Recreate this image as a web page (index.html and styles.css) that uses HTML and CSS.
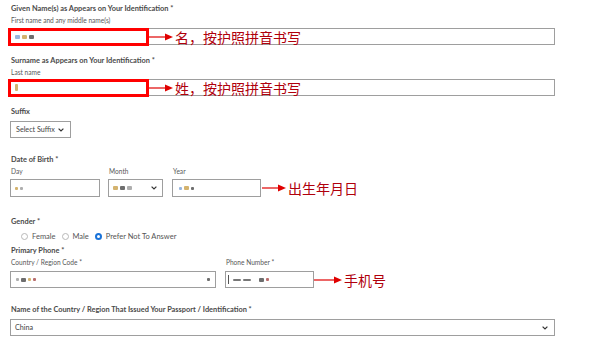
FILE: index.html
```html
<!DOCTYPE html>
<html lang="en">
<head>
<meta charset="utf-8">
<title>Identification form</title>
<link rel="stylesheet" href="styles.css">
</head>
<body>
<form class="form">
  <section class="group g-given">
    <div class="label">Given Name(s) as Appears on Your Identification *</div>
    <div class="sub">First name and any middle name(s)</div>
    <div class="annot">
      <div class="box full"><span class="sm s-blue"></span><span class="sm s-gold"></span><span class="sm s-dark"></span></div>
      <div class="redbox"></div>
      <div class="note over">
        <svg class="arrow" width="24" height="10" viewBox="0 0 24 10"><line x1="0" y1="5" x2="17" y2="5" stroke="#e00000" stroke-width="1.2"/><polygon points="16,1.5 24,5 16,8.5" fill="#e00000"/></svg>
        <span class="cn">名，按护照拼音书写</span>
      </div>
    </div>
  </section>

  <section class="group g-surname">
    <div class="label">Surname as Appears on Your Identification *</div>
    <div class="sub">Last name</div>
    <div class="annot">
      <div class="box full"><span class="sm s-gold tall"></span></div>
      <div class="redbox"></div>
      <div class="note over">
        <svg class="arrow" width="24" height="10" viewBox="0 0 24 10"><line x1="0" y1="5" x2="17" y2="5" stroke="#e00000" stroke-width="1.2"/><polygon points="16,1.5 24,5 16,8.5" fill="#e00000"/></svg>
        <span class="cn">姓，按护照拼音书写</span>
      </div>
    </div>
  </section>

  <section class="group g-suffix">
    <div class="label">Suffix</div>
    <div class="box select suffix">
      <span class="val">Select Suffix</span>
      <svg class="chev" width="6" height="4" viewBox="0 0 6 4"><polyline points="0.6,0.6 3,3 5.4,0.6" fill="none" stroke="#333" stroke-width="1.2"/></svg>
    </div>
  </section>

  <section class="group g-dob">
    <div class="label">Date of Birth *</div>
    <div class="date-row">
      <div class="col">
        <div class="sub">Day</div>
        <div class="box tall-box day"><span class="sm s-gold small"></span><span class="sm s-grey small"></span></div>
      </div>
      <div class="col">
        <div class="sub">Month</div>
        <div class="box tall-box select month">
          <span class="val"><span class="sm s-gold"></span><span class="sm s-dark"></span><span class="sm s-grey"></span></span>
          <svg class="chev" width="6" height="4" viewBox="0 0 6 4"><polyline points="0.6,0.6 3,3 5.4,0.6" fill="none" stroke="#333" stroke-width="1.2"/></svg>
        </div>
      </div>
      <div class="col">
        <div class="sub">Year</div>
        <div class="note-row">
          <div class="box tall-box year"><span class="sm s-blue small"></span><span class="sm s-gold"></span><span class="sm s-dark small"></span></div>
          <div class="note">
            <svg class="arrow" width="24" height="10" viewBox="0 0 24 10"><line x1="0" y1="5" x2="17" y2="5" stroke="#e00000" stroke-width="1.2"/><polygon points="16,1.5 24,5 16,8.5" fill="#e00000"/></svg>
            <span class="cn">出生年月日</span>
          </div>
        </div>
      </div>
    </div>
  </section>

  <section class="group g-gender">
    <div class="label">Gender *</div>
    <div class="radios">
      <span class="radio"><span class="dot"></span>Female</span>
      <span class="radio"><span class="dot"></span>Male</span>
      <span class="radio"><span class="dot on"></span>Prefer Not To Answer</span>
    </div>
  </section>

  <section class="group g-phone">
    <div class="label">Primary Phone *</div>
    <div class="phone-row">
      <div class="col">
        <div class="sub">Country / Region Code *</div>
        <div class="box code">
          <span class="val"><span class="sm s-grey small"></span><span class="sm s-dark"></span><span class="sm s-gold small"></span><span class="sm s-red small"></span></span>
          <span class="sm s-dark small"></span>
        </div>
      </div>
      <div class="col">
        <div class="sub">Phone Number *</div>
        <div class="note-row">
          <div class="box phone"><span class="caret"></span><span class="sm s-dash"></span><span class="sm s-dash"></span><span class="sm s-dark gap"></span><span class="sm s-red small"></span></div>
          <div class="note">
            <svg class="arrow" width="28" height="10" viewBox="0 0 28 10"><line x1="0" y1="5" x2="21" y2="5" stroke="#e00000" stroke-width="1.2"/><polygon points="20,1.5 28,5 20,8.5" fill="#e00000"/></svg>
            <span class="cn">手机号</span>
          </div>
        </div>
      </div>
    </div>
  </section>

  <section class="group g-issued">
    <div class="label">Name of the Country / Region That Issued Your Passport / Identification *</div>
    <div class="box select full">
      <span class="val">China</span>
      <svg class="chev" width="6" height="4" viewBox="0 0 6 4"><polyline points="0.6,0.6 3,3 5.4,0.6" fill="none" stroke="#333" stroke-width="1.2"/></svg>
    </div>
  </section>
</form>
</body>
</html>
```

FILE: styles.css
```css
html, body {
  margin: 0;
  padding: 0;
  background: #ffffff;
}

body {
  width: 613px;
  height: 348px;
  overflow: hidden;
  font-family: Lato, "Open Sans", "Liberation Sans", sans-serif;
  color: #444;
}

.form {
  display: flex;
  flex-direction: column;
  padding: 4px 0 0 10px;
  margin: 0;
}

.label {
  font-size: 7.4px;
  font-weight: 700;
  line-height: 10px;
  color: #4a4a4a;
  padding-left: 1px;
  white-space: nowrap;
}

.sub {
  font-size: 6.6px;
  line-height: 10px;
  color: #585858;
  padding-left: 1px;
  margin-top: 1px;
  white-space: nowrap;
}

.box {
  box-sizing: border-box;
  height: 17px;
  border: 1px solid #9e9e9e;
  background: #fff;
  display: flex;
  align-items: center;
  gap: 2px;
  padding: 0 4px;
  font-size: 7.2px;
  color: #444;
}

.full { width: 545px; }

.select { justify-content: space-between; padding-right: 6px; }
.select .val { display: flex; align-items: center; gap: 2px; padding-left: 0; }
.chev { display: block; }

/* groups */
.g-given .annot { margin-top: 3px; }
.g-surname { margin-top: 11px; }
.g-surname .annot { margin-top: 2px; }
.g-suffix { margin-top: 11px; }
.g-suffix .box { margin-top: 4px; }
.suffix { width: 61px; padding-left: 5px; }
.g-dob { margin-top: 17px; }
.g-gender { margin-top: 20px; }
.g-phone { margin-top: 5px; }
.g-issued { margin-top: 17px; }
.g-issued .box { margin-top: 4px; }

/* annotation overlays */
.annot {
  position: relative;
}

.redbox {
  position: absolute;
  left: -2px;
  top: 0;
  width: 141px;
  height: 18px;
  box-sizing: border-box;
  border: 3px solid #ff0000;
}

.note {
  display: flex;
  align-items: center;
  gap: 2px;
}

.note.over {
  position: absolute;
  left: 139px;
  top: 0;
  height: 18px;
}

.arrow { display: block; }

.cn {
  font-family: "Noto Sans CJK SC", "Noto Sans", sans-serif;
  font-size: 14px;
  line-height: 16px;
  color: #b0000c;
  white-space: nowrap;
}

/* date row */
.date-row {
  display: flex;
  gap: 8px;
}

.date-row .col + .col + .col { margin-left: 1px; }

.date-row .box { margin-top: 3px; }
.note-row { display: flex; align-items: center; }
.date-row .note-row .note { margin-top: 3px; margin-left: 1px; }

.tall-box { height: 18px; }
.day { width: 90px; }
.month { width: 55px; padding-right: 5px; }
.year { width: 89px; padding-left: 6px; }

/* gender */
.radios {
  display: flex;
  align-items: center;
  gap: 6px;
  margin-top: 4px;
  padding-left: 11px;
  height: 10px;
}

.radio {
  display: flex;
  align-items: center;
  gap: 4px;
  font-size: 7.5px;
  color: #555;
}

.dot {
  box-sizing: border-box;
  width: 7px;
  height: 7px;
  border-radius: 50%;
  border: 1px solid #b8b8b8;
  background: #fff;
}

.dot.on {
  border: 2px solid #1a73d9;
  background: #fff;
}

/* phone */
.phone-row {
  display: flex;
  gap: 9px;
}

.phone-row .box { margin-top: 4px; }
.phone-row .note-row .note { margin-top: 4px; margin-left: 0; }
.code { width: 206px; justify-content: space-between; padding: 0 5px 0 5px; }
.code .val { display: flex; align-items: center; gap: 2px; }
.phone { width: 89px; padding-left: 2px; }

.caret {
  width: 1px;
  height: 9px;
  background: #555;
  margin-right: 2px;
}

/* blurred (redacted) values */
.sm {
  display: inline-block;
  width: 5px;
  height: 4px;
  border-radius: 1px;
  opacity: 0.8;
}
.sm.small { width: 3px; height: 3px; }
.sm.tall { width: 3px; height: 7px; }
.sm.gap { margin-left: 6px; }
.s-blue { background: #7ea4d6; }
.s-gold { background: #c9a04a; }
.s-dark { background: #4a4a4a; }
.s-grey { background: #9a9a9a; }
.s-red { background: #a84848; }
.s-dash { width: 8px; height: 2px; background: #555; }
```
